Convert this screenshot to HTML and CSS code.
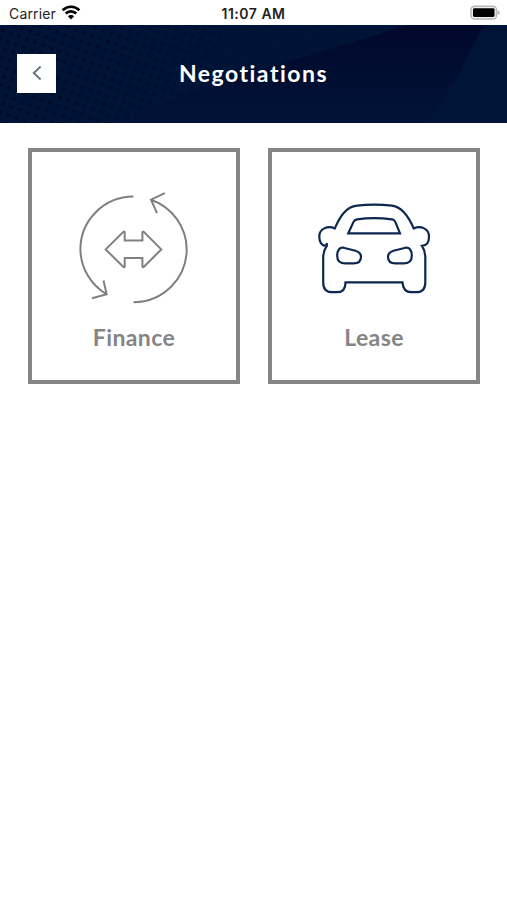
FILE: index.html
```
<!DOCTYPE html>
<html lang="en">
<head>
  <meta charset="UTF-8" />
  <meta name="viewport" content="width=device-width, initial-scale=1.0" />
  <title>Negotiations</title>
  <link rel="stylesheet" href="styles.css">
</head>
<body>
  <div class="status-bar">
    <div class="carrier">
      <span>Carrier</span>
      <svg class="wifi" viewBox="0 0 20 15" width="20" height="15">
        <path d="M1.6 5.2A12 12 0 0 1 18.4 5.2M4.7 8.5A7.6 7.6 0 0 1 15.3 8.5" />
        <path class="wifi-dot" d="M6.9 11.2A4.4 4.4 0 0 1 13.1 11.2L10 14.4Z" />
      </svg>
    </div>
    <div class="time">11:07 AM</div>
    <svg class="battery" viewBox="0 0 32 16" width="32" height="16">
      <rect class="battery-case" x="2" y="1.2" width="25.5" height="12.8" rx="3.6" />
      <rect x="4" y="3.2" width="21.5" height="8.8" rx="1.4" />
      <path class="battery-tip" d="M28.5 5.2Q31 6.2 31 7.6T28.5 10.2Z" />
    </svg>
  </div>

  <header class="header">
    <svg class="header-bg" viewBox="0 0 507 98" preserveAspectRatio="none">
      <defs>
        <pattern id="dots" width="8.6" height="8.6" patternUnits="userSpaceOnUse" patternTransform="rotate(20)">
          <circle cx="4.3" cy="4.3" r="2" />
        </pattern>
        <linearGradient id="fade" x1="0" y1="0" x2="1" y2="0.15">
          <stop offset="0" stop-color="#fff" />
          <stop offset="0.35" stop-color="#fff" stop-opacity="0.6" />
          <stop offset="0.6" stop-color="#fff" stop-opacity="0.25" />
          <stop offset="1" stop-color="#fff" stop-opacity="0.15" />
        </linearGradient>
        <linearGradient id="beam" x1="0" y1="0" x2="0" y2="1">
          <stop offset="0" stop-color="#00082b" />
          <stop offset="1" stop-color="#001337" />
        </linearGradient>
        <mask id="dot-mask">
          <rect width="390" height="98" fill="url(#fade)" />
        </mask>
      </defs>
      <rect width="390" height="98" fill="url(#dots)" mask="url(#dot-mask)" />
      <path d="M398 3Q310 31 240 50Q180 68 120 98H427Q458 54 484 0H408Z" fill="url(#beam)" />
    </svg>
    <button class="back" aria-label="Back">
      <svg viewBox="0 0 10 16" width="10" height="16"><path d="M8.6 1.5L1.8 8L8.6 14.5" /></svg>
    </button>
    <h1>Negotiations</h1>
  </header>

  <main class="cards">
    <a class="card">
      <svg class="icon icon-finance" viewBox="0 0 130 125" width="130" height="125">
        <path d="M63.5 11.6A53 53 0 0 0 10.4 64.4A53 53 0 0 0 36.7 109.3M33.5 95.5L36.7 109.3L22 113.2" />
        <path d="M63.5 117.2A53 53 0 0 0 116.7 64.4A53 53 0 0 0 81 14.7M94.8 8.2L81 14.7L87 28.2" />
        <path d="M35.7 64.4L53.4 46.8Q54.7 46 54.7 47.5V55.6H72.4V47.5Q72.4 46 73.7 46.8L91.3 64.4L73.7 82Q72.4 82.8 72.4 81.3V73.1H54.7V81.3Q54.7 82.8 53.4 82Z" />
      </svg>
      <span>Finance</span>
    </a>
    <a class="card">
      <svg class="icon icon-lease" viewBox="0 -5.4 130 125" width="130" height="125">
        <path d="M24.8 38C30 26 36 16.5 47 15.3Q64 13 82 15.3C92 16.5 98.5 26 103.7 38C111 34.8 119 38.5 119 46C119 52 117.5 55 112 55.5Q115.3 60.5 115.3 67V92Q115.3 101.8 106 101.8H101.5Q93 101.8 92.5 92H35.5Q35.5 101.8 27 101.8H22.5Q13.2 101.8 13.2 92V67Q13.2 60.5 16.8 55.5V52.5V55.5C11 55.5 9.3 52 9.3 46C9.3 38.5 17.5 34.8 24.8 38Z" />
        <path d="M38.3 42.9L43.5 31.5Q44.5 29.4 47 28.9Q64 26.6 82 28.9Q84.3 29.4 85.3 31.5L90 42.9Z" />
        <path d="M33.5 57.3L45.5 60.3Q51 62.2 51 66.3Q51 73 43.5 73H35.5Q27.2 73 27.2 65.3C27.2 60 29.5 56.8 33.5 57.3Z" />
        <path d="M95.5 57.3L83.5 60.3Q78 62.2 78 66.3Q78 73 85.5 73H93.5Q101.8 73 101.8 65.3C101.8 60 99.5 56.8 95.5 57.3Z" />
      </svg>
      <span>Lease</span>
    </a>
  </main>
</body>
</html>
```

FILE: styles.css
```
* { box-sizing: border-box; }
body {
  margin: 0;
  min-height: 900px;
  background: #fff;
  font-family: Lato, sans-serif;
}
.status-bar {
  display: grid;
  grid-template-columns: 1fr auto 1fr;
  align-items: center;
  height: 25px;
  padding: 2px 6px 0 9px;
  font-family: Inter, "Liberation Sans", sans-serif;
  font-size: 14px;
  color: #222;
}
.carrier {
  display: flex;
  align-items: center;
  gap: 5px;
  letter-spacing: 0.15px;
}
.wifi {
  fill: none;
  stroke: #000;
  stroke-width: 2.6;
  margin-top: -3px;
}
.wifi-dot {
  fill: #000;
  stroke: none;
}
.time {
  margin-right: 3px;
  font-weight: 600;
  letter-spacing: 0.5px;
}
.battery {
  justify-self: end;
  margin-top: -2px;
}
.battery-case {
  fill: #eee;
  stroke: #b8b8b8;
  stroke-width: 1.5;
}
.battery-tip { fill: #b8b8b8; }
.header {
  position: relative;
  display: flex;
  align-items: center;
  height: 98px;
  padding: 0 17px 2px;
  background: #001438;
}
.header-bg {
  position: absolute;
  inset: 0;
  width: 100%;
  height: 100%;
}
#dots circle { fill: #000820; }
.back {
  position: relative;
  display: flex;
  align-items: center;
  justify-content: center;
  width: 39px;
  height: 39px;
  padding: 0;
  border: none;
  background: #fff;
}
.back svg {
  fill: none;
  stroke: #6c7783;
  stroke-width: 2;
}
h1 {
  position: relative;
  flex: 1;
  margin: 0 39px 0 0;
  text-align: center;
  font-size: 23px;
  font-weight: 700;
  letter-spacing: 1.5px;
  color: #fff;
}
.cards {
  display: grid;
  grid-template-columns: 1fr 1fr;
  gap: 28px;
  padding: 25px 27px 0 28px;
}
.card {
  display: flex;
  flex-direction: column;
  align-items: center;
  height: 236px;
  padding-top: 33px;
  border: 4px solid #868686;
  color: #858585;
  font-size: 23px;
  font-weight: 700;
  line-height: 28px;
}
.card span {
  margin-top: 13px;
  letter-spacing: 0.4px;
}
.icon {
  margin-left: 2px;
  fill: none;
  stroke-width: 2;
}
.icon-finance { stroke: #808080; }
.icon-lease {
  stroke: #0d2850;
  stroke-width: 2.2;
}
```
